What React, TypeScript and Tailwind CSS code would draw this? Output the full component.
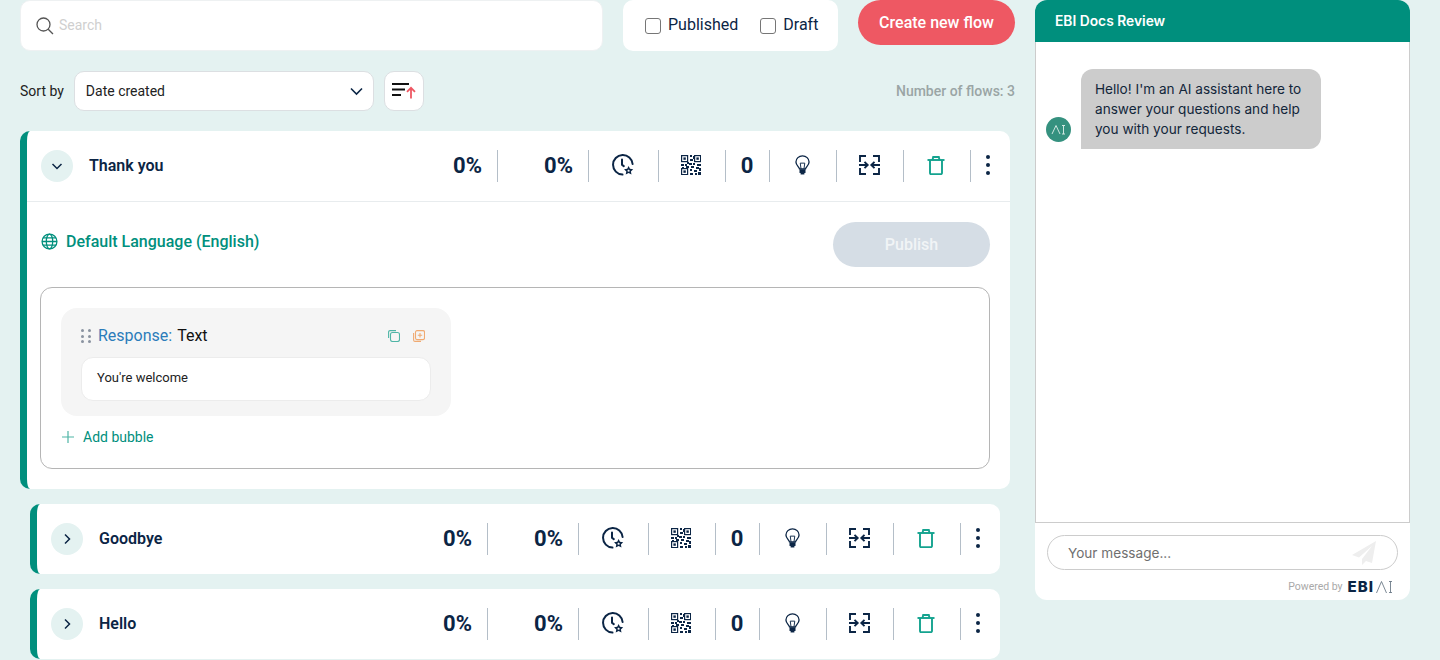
import React from "react";

const Clock = () => (
  <svg width="24" height="24" viewBox="0 0 24 24" fill="none" stroke="#0b2545" strokeWidth="2">
    <path d="M11.5 21.6A9.8 9.8 0 1 1 21.6 11" strokeLinecap="round" />
    <path d="M11 6.5v5.2l1.8 1.4" strokeLinecap="round" />
    <path d="M17.6 12.9l1.4 2.9 3.2.4-2.3 2.2.6 3.2-2.9-1.5-2.9 1.500.6-3.2-2.3-2.2 3.2-.4z" fill="#0b2545" stroke="none" />
    <path d="M17.6 16.2l.5 1 1 .1-.8.7.2 1-.9-.5-.9.5.2-1-.8-.7 1-.1z" fill="#fff" stroke="none" />
  </svg>
);

const Qr = () => {
  const cells = [
    [9, 0, 2, 2], [12, 1, 2, 3], [9, 4, 3, 2], [0, 9, 3, 2], [4, 9, 2, 2], [8, 8, 3, 2], [12, 8, 2, 2], [16, 9, 4, 2],
    [1, 12, 2, 1], [5, 11, 3, 2], [10, 11, 3, 2], [15, 12, 3, 2], [9, 14, 2, 2], [13, 15, 3, 2], [18, 13, 2, 3],
    [9, 18, 3, 2], [14, 18, 2, 2], [17, 17, 3, 3], [6, 7, 2, 2],
  ];
  return (
    <svg width="20" height="20" viewBox="0 0 20 20" fill="#0b2545">
      {[[0, 0], [13, 0], [0, 13]].map(([x, y]) => (
        <g key={`${x}${y}`}>
          <rect x={x + 0.6} y={y + 0.6} width="6" height="6" fill="none" stroke="#0b2545" strokeWidth="1.2" />
          <rect x={x + 2.4} y={y + 2.4} width="2.4" height="2.4" />
        </g>
      ))}
      {cells.map(([x, y, w, h]) => (
        <rect key={`${x}-${y}`} x={x} y={y} width={w} height={h} />
      ))}
    </svg>
  );
};

const Bulb = () => (
  <svg width="15" height="20" viewBox="0 0 16 21" fill="none" stroke="#0b2545" strokeWidth="1.4">
    <path d="M4.8 14.6C4.6 12.6 1 11 1 7.3a7 6.6 0 0 1 14 0c0 3.7-3.6 5.3-3.8 7.3z" />
    <path d="M6.4 14.5 5.6 8.5h4.8l-.8 6" strokeWidth="1" />
    <rect x="4.8" y="15" width="6.4" height="4" fill="#0b2545" stroke="none" />
    <rect x="6" y="19" width="4" height="1.6" fill="#0b2545" stroke="none" />
  </svg>
);

const Collapse = () => (
  <svg width="21" height="20" viewBox="0 0 21 20" fill="none" stroke="#0b2545" strokeWidth="1.9">
    <path d="M7 1H1v6M14 1h6v6M1 13v6h6M20 13v6h-6" />
    <path d="M0 10h8.500M5.500 6.800l3.200 3.200-3.200 3.200M21 10h-8.500M15.500 6.800l-3.200 3.200 3.200 3.200" />
  </svg>
);

const Trash = () => (
  <svg width="18" height="19" viewBox="0 0 18 19" fill="none" stroke="#14a38f" strokeWidth="1.9">
    <path d="M0.500 4h17" />
    <path d="M5.500 4l.7-3h5.600l.7 3" />
    <path d="M3 4v13a1.200 1.200 0 0 0 1.200 1.200h9.600A1.200 1.200 0 0 0 15 17V4" />
  </svg>
);

const Kebab = () => (
  <div className="flex flex-col gap-[4px] pb-[2px]">
    <span className="block h-[4px] w-[4px] rounded-full bg-[#0b2545]" />
    <span className="block h-[4px] w-[4px] rounded-full bg-[#0b2545]" />
    <span className="block h-[4px] w-[4px] rounded-full bg-[#0b2545]" />
  </div>
);

const Chevron = ({ open }: { open: boolean }) => (
  <svg width="14" height="14" viewBox="0 0 14 14" fill="none" stroke="#0b2545" strokeWidth="1.500">
    <path d={open ? "M2.500 5l4.500 4.500L11.500 5" : "M5 2.500 9.500 7 5 11.500"} />
  </svg>
);

const FlowHeader = ({ title, open }: { title: string; open: boolean }) => (
  <div className={`flex items-center pl-[14px] ${open ? "h-[71px] border-b border-[#e8ecee]" : "h-[70px]"}`}>
    <div className="flex h-[32px] w-[32px] items-center justify-center rounded-full bg-[#e4f2f1]">
      <Chevron open={open} />
    </div>
    <div className="ml-[16px] flex-1 text-[16px] font-semibold text-[#0b2545]">{title}</div>
    <div className="flex h-[32px] items-stretch text-[#0b2545]">
      <div className="flex items-center border-r border-[#b4bec8] pb-[2px] pr-[15px] text-[22px] font-bold">0%</div>
      <div className="flex w-[91px] items-center justify-end border-r border-[#b4bec8] pb-[2px] pr-[15px] text-[22px] font-bold">0%</div>
      <div className="flex w-[70px] items-center justify-center border-r border-[#b4bec8] pb-[2px] pr-[2px]"><Clock /></div>
      <div className="flex w-[67px] items-center justify-center border-r border-[#b4bec8] pb-[2px] pr-[2px]"><Qr /></div>
      <div className="flex w-[44px] items-center justify-center border-r border-[#b4bec8] pb-[2px] pr-[1px] text-[22px] font-bold">0</div>
      <div className="flex w-[67px] items-center justify-center border-r border-[#b4bec8] pb-[2px] pr-[2px]"><Bulb /></div>
      <div className="flex w-[67px] items-center justify-center border-r border-[#b4bec8] pb-[2px] pr-[2px]"><Collapse /></div>
      <div className="flex w-[67px] items-center justify-center border-r border-[#b4bec8] pb-[2px] pr-[2px]"><Trash /></div>
      <div className="flex w-[39px] items-center pl-[15px]"><Kebab /></div>
    </div>
  </div>
);

const Grip = () => (
  <div className="grid grid-cols-2 gap-x-[4px] gap-y-[2.500px]">
    {[0, 1, 2, 3, 4, 5].map((i) => (
      <span key={i} className="block h-[3px] w-[3px] rounded-full bg-[#8a93a0]" />
    ))}
  </div>
);

const Body = () => (
  <div className="pb-[20px] pl-[13px] pr-[20px] pt-[20px]">
    <div className="flex items-start justify-between">
      <div className="mt-[8px] flex items-center gap-[8px] pl-[1px] text-[16px] font-medium text-[#008f7d]">
        <svg width="17" height="17" viewBox="0 0 24 24" fill="none" stroke="#008f7d" strokeWidth="1.800" className="-mt-[1px]">
          <circle cx="12" cy="12" r="10.500" />
          <ellipse cx="12" cy="12" rx="4.500" ry="10.500" />
          <path d="M1.500 12h21M3 7h18M3 17h18" />
        </svg>
        Default Language (English)
      </div>
      <div className="flex h-[45px] w-[157px] items-center justify-center rounded-full bg-[#d5dde5] text-[16px] font-medium text-[#f1f4f6]">Publish</div>
    </div>
    <div className="mt-[20px] h-[182px] rounded-[12px] border border-[#b5b5b5] px-[20px] pt-[20px]">
      <div className="h-[108px] w-[390px] rounded-[16px] bg-[#f5f5f5] px-[20px] pt-[17px]">
        <div className="flex h-[22px] items-center">
          <Grip />
          <span className="ml-[7px] text-[16px] text-[#2b7cba]">Response:</span>
          <span className="ml-[5px] flex-1 text-[16px] text-[#111]">Text</span>
          <svg width="12" height="12" viewBox="0 0 12 12" fill="none" stroke="#4fb5a6" strokeWidth="1.100" className="mr-[13px]">
            <rect x="2.500" y="2.500" width="9" height="9" rx="2" />
            <path d="M0.600 8V2A1.400 1.400 0 0 1 2 .6h6" />
          </svg>
          <svg width="12" height="12" viewBox="0 0 12 12" fill="none" stroke="#f0aa72" strokeWidth="1.100" className="mr-[6px]">
            <rect x="2.500" y=".6" width="9" height="9" rx="1.500" />
            <path d="M.6 3v7A1.400 1.400 0 0 0 2 11.400h6M7 3v4.500M4.800 5.200h4.400" />
          </svg>
        </div>
        <div className="mt-[10px] flex h-[44px] items-center rounded-[12px] border border-[#ececec] bg-white pb-[2px] pl-[15px] text-[13px] text-[#222]">You're welcome</div>
      </div>
      <div className="mt-[11px] flex items-center gap-[9px] pl-[1px] text-[14px] text-[#008f7d]">
        <svg width="12" height="12" viewBox="0 0 12 12" stroke="#4fb5a6" strokeWidth="1.200" className="-mt-[1px]"><path d="M6 0v12M0 6h12" /></svg>
        Add bubble
      </div>
    </div>
  </div>
);

const Check = ({ label }: { label: string }) => (
  <label className="flex items-center gap-[7px] text-[16px] text-[#0b2545]">
    <input type="checkbox" className="h-[16px] w-[16px] appearance-none rounded-[3px] border border-[#767676] bg-white" />
    <span className="-mt-[2px]">{label}</span>
  </label>
);

export default function App() {
  return (
    <div className="flex h-[660px] w-[1440px] items-start gap-[20px] overflow-hidden bg-[#e4f2f1] pl-[20px] [font-family:Roboto,sans-serif]">
      <div className="w-[995px]">
        <div className="flex items-start">
          <div className="flex h-[51px] w-[583px] items-center gap-[5px] rounded-[10px] border border-[#eef1f2] bg-white pl-[15px]">
            <svg width="18" height="18" viewBox="0 0 18 18" fill="none" stroke="#555" strokeWidth="1.300">
              <circle cx="7.500" cy="7.500" r="6.500" />
              <path d="M12.200 12.200 17 17" />
            </svg>
            <span className="text-[14px] text-[#cfcfcf]">Search</span>
          </div>
          <div className="ml-[20px] flex h-[51px] w-[215px] items-center gap-[22px] rounded-[10px] bg-white pl-[22px]">
            <Check label="Published" />
            <Check label="Draft" />
          </div>
          <div className="ml-[20px] flex h-[45px] w-[157px] items-center justify-center rounded-full bg-[#ee5863] text-[16px] font-medium text-white">Create new flow</div>
        </div>
        <div className="mt-[20px] flex h-[40px] items-center">
          <span className="text-[14px] text-[#222]">Sort by</span>
          <div className="ml-[10px] flex h-[40px] w-[300px] items-center justify-between rounded-[10px] border border-[#dcdfe2] bg-white pl-[11px] pr-[10px] text-[14px] text-[#222]">
            Date created
            <svg width="13" height="9" viewBox="0 0 13 9" fill="none" stroke="#0b2545" strokeWidth="1.600"><path d="M1 1.500l5.500 5.500L12 1.500" /></svg>
          </div>
          <div className="ml-[10px] flex h-[40px] w-[40px] items-center justify-center rounded-[10px] border border-[#dcdfe2] bg-white">
            <svg width="24" height="16" viewBox="0 0 24 16" fill="none">
              <path d="M0 1h17M0 6.500h13M0 12h9" stroke="#111" strokeWidth="1.800" />
              <path d="M19 15.500V5M15 8.800 19 4.800l4 4" stroke="#ee5863" strokeWidth="1.800" />
            </svg>
          </div>
          <span className="ml-auto text-[14px] font-medium text-[#9aa5a5]">Number of flows: 3</span>
        </div>
        <div className="mt-[20px] flex w-[990px] flex-col">
          <div className="w-[990px] rounded-[10px] border-l-[7px] border-[#008f7d] bg-white">
            <FlowHeader title="Thank you" open />
            <Body />
          </div>
          <div className="ml-[10px] mt-[15px] w-[970px] rounded-[10px] border-l-[7px] border-[#008f7d] bg-white">
            <FlowHeader title="Goodbye" open={false} />
          </div>
          <div className="ml-[10px] mt-[15px] w-[970px] rounded-[10px] border-l-[7px] border-[#008f7d] bg-white">
            <FlowHeader title="Hello" open={false} />
          </div>
        </div>
      </div>
      <div className="flex h-[600px] w-[375px] flex-col rounded-[12px] bg-white [font-family:Inter,sans-serif]">
        <div className="flex h-[42px] items-center rounded-t-[12px] bg-[#008f7d] pl-[20px] text-[13.800px] font-semibold text-white">EBI Docs Review</div>
        <div className="flex h-[481px] items-start gap-[10px] border-x border-b border-[#cccccc] pl-[10px] pt-[27px]">
          <div className="mt-[48px] flex h-[25px] w-[25px] items-center justify-center rounded-full bg-[#35917f]">
            <svg width="15" height="11" viewBox="0 0 15 11" fill="none" stroke="#cfe6e0" strokeWidth="1"><path d="M1 10 5 1.500l4 8.500M12.500 1.500v8.500M11 1.500h3M11 10h3" /></svg>
          </div>
          <div className="h-[80px] w-[240px] rounded-[12px] rounded-bl-none bg-[#cccccc] px-[14px] pt-[10px] text-[13.600px] leading-[20px] text-[#12263a]">
            Hello! I'm an AI assistant here to answer your questions and help you with your requests.
          </div>
        </div>
        <div className="mx-[12px] mt-[12px] flex h-[35px] items-center justify-between rounded-full border border-[#cccccc] pl-[20px] pr-[20px]">
          <span className="pt-[2px] text-[13.600px] text-[#6f6f6f]">Your message...</span>
          <svg width="26" height="26" viewBox="0 0 26 26" fill="#eeeeee"><path d="M25 1 1 15l7 2.500L21 6 11 19v6l4-4 6 2z" /></svg>
        </div>
        <div className="mr-[17px] mt-[9px] flex items-center justify-end gap-[5px]">
          <span className="text-[10.500px] text-[#a9a9a9] [font-family:Roboto,sans-serif]">Powered by</span>
          <span className="text-[15px] font-extrabold leading-[15px] tracking-[1px] text-[#0b2545]">EBI</span>
          <svg width="17" height="12" viewBox="0 0 17 12" fill="none" stroke="#5b6b7a" strokeWidth="0.800" className="-ml-[3px]"><path d="M.5 12 5.500 .5 10.500 12M14.500 .5v11M13 .5h3M13 11.500h3" /></svg>
        </div>
      </div>
    </div>
  );
}
